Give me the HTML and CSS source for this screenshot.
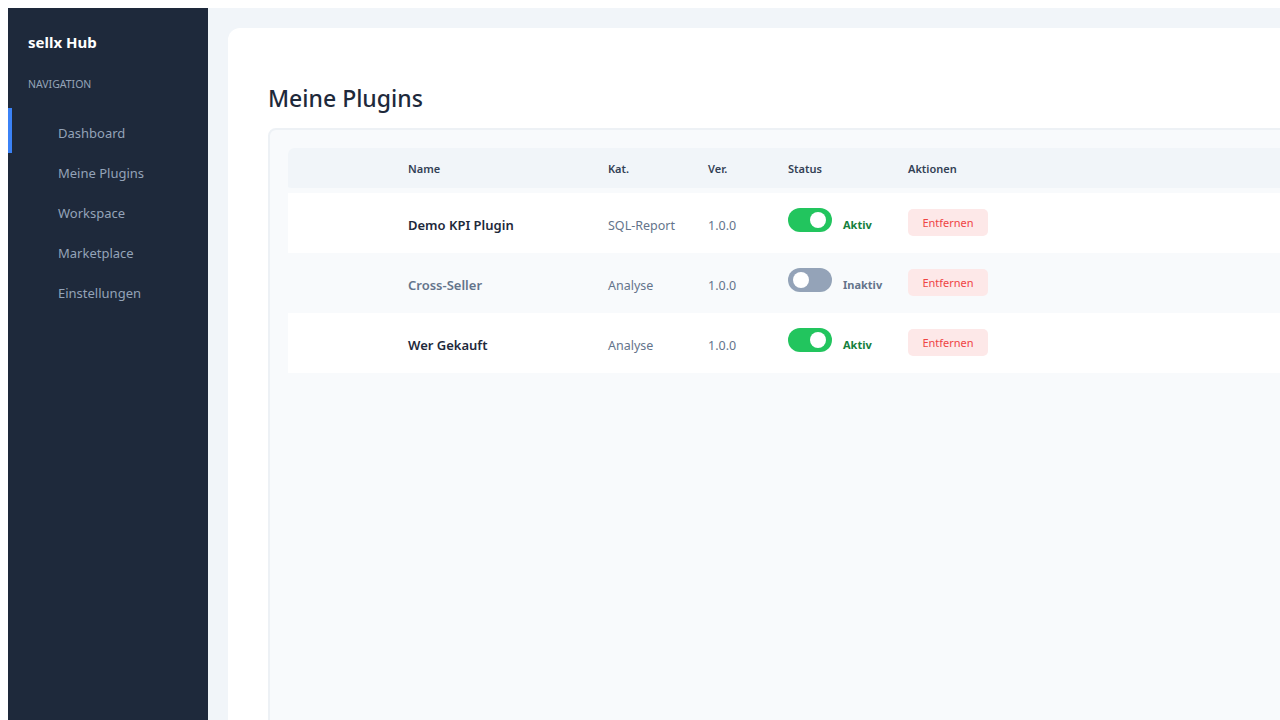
FILE: index.html
```html
<!DOCTYPE html>
<html lang="de">
<head>
  <meta charset="UTF-8" />
  <meta name="viewport" content="width=device-width, initial-scale=1.0" />
  <title>sellx Hub – Meine Plugins</title>
  <link rel="stylesheet" href="styles.css">
</head>
<body>
  <div class="app">
    <!-- Sidebar -->
    <aside class="sidebar">
      <div class="brand">sellx Hub</div>
      <div class="nav-label">NAVIGATION</div>
      <nav class="nav">
        <a class="nav-item active" href="#">Dashboard</a>
        <a class="nav-item" href="#">Meine Plugins</a>
        <a class="nav-item" href="#">Workspace</a>
        <a class="nav-item" href="#">Marketplace</a>
        <a class="nav-item" href="#">Einstellungen</a>
      </nav>
    </aside>

    <!-- Main -->
    <main class="main">
      <section class="card">
        <h2 class="page-title">Meine Plugins</h2>
        <div class="panel">
          <table class="plugins">
            <colgroup>
              <col class="c-icon">
              <col class="c-name">
              <col class="c-cat">
              <col class="c-ver">
              <col class="c-status">
              <col class="c-actions">
            </colgroup>
            <thead>
              <tr>
                <th></th>
                <th>Name</th>
                <th>Kat.</th>
                <th>Ver.</th>
                <th>Status</th>
                <th>Aktionen</th>
              </tr>
            </thead>
            <tbody>
              <tr>
                <td></td>
                <td class="name">Demo KPI Plugin</td>
                <td class="muted">SQL-Report</td>
                <td class="muted">1.0.0</td>
                <td class="status"><span class="toggle on"></span><span class="state on">Aktiv</span></td>
                <td class="actions"><button class="btn-remove">Entfernen</button></td>
              </tr>
              <tr>
                <td></td>
                <td class="name off">Cross-Seller</td>
                <td class="muted">Analyse</td>
                <td class="muted">1.0.0</td>
                <td class="status"><span class="toggle"></span><span class="state">Inaktiv</span></td>
                <td class="actions"><button class="btn-remove">Entfernen</button></td>
              </tr>
              <tr>
                <td></td>
                <td class="name">Wer Gekauft</td>
                <td class="muted">Analyse</td>
                <td class="muted">1.0.0</td>
                <td class="status"><span class="toggle on"></span><span class="state on">Aktiv</span></td>
                <td class="actions"><button class="btn-remove">Entfernen</button></td>
              </tr>
            </tbody>
          </table>
        </div>
      </section>
    </main>
  </div>
</body>
</html>
```

FILE: styles.css
```css
body {
  margin: 8px 0 0 8px;
  font-family: "Noto Sans", "Open Sans", sans-serif;
  color: #1e293b;
}
.app {
  display: flex;
  height: calc(100vh - 8px);
  overflow: hidden;
}

/* sidebar */
.sidebar {
  width: 200px;
  flex-shrink: 0;
  background: #1e293b;
  padding-top: 24px;
}
.brand {
  padding: 0 20px;
  font-size: 15px;
  font-weight: 700;
  line-height: 20px;
  color: #fff;
}
.nav-label {
  margin-top: 24px;
  padding: 0 20px;
  font-size: 10.5px;
  line-height: 16px;
  color: #94a3b8;
}
.nav {
  display: flex;
  flex-direction: column;
  margin-top: 16px;
}
.nav-item {
  display: block;
  padding: 10px 0 10px 46px;
  border-left: 4px solid transparent;
  font-size: 13px;
  line-height: 20px;
  color: #94a3b8;
  text-decoration: none;
}
.nav-item.active {
  border-left-color: #3b82f6;
  padding-top: 15px;
  padding-bottom: 10px;
}

/* main */
.main {
  flex: 1;
  min-width: 0;
  background: #f1f5f9;
  padding: 20px 0 0 20px;
}
.card {
  width: 1224px;
  min-height: 800px;
  background: #fff;
  border-radius: 12px;
  padding: 40px;
}
.page-title {
  margin: 14px 0 14px;
  font-size: 23px;
  font-weight: 500;
  line-height: 32px;
  color: #1e293b;
}
.panel {
  background: #f8fafc;
  border: 2px solid #edf1f5;
  border-radius: 8px;
  padding: 18px;
  min-height: 700px;
}

/* table */
.plugins {
  width: 1104px;
  table-layout: fixed;
  border-collapse: separate;
  border-spacing: 0;
}
.c-icon { width: 120px; }
.c-name { width: 200px; }
.c-cat { width: 100px; }
.c-ver { width: 80px; }
.c-status { width: 120px; }
.plugins th {
  height: 40px;
  padding: 0;
  text-align: left;
  font-size: 11px;
  font-weight: 600;
  color: #334155;
  background: #f1f5f9;
  background-clip: padding-box;
  border-bottom: 5px solid transparent;
}
.plugins th:first-child { border-radius: 6px 0 0 6px; }
.plugins th:last-child { border-radius: 0 6px 6px 0; }
.plugins tbody tr { height: 60px; }
.plugins tbody tr:nth-child(odd) { background: #fff; }
.plugins td {
  padding: 4px 0 0;
  vertical-align: middle;
  font-size: 12.5px;
}
.plugins td.status { padding: 0 0 6px; }
.plugins td.actions { padding: 0 0 2px; }
.plugins td.name {
  font-size: 13px;
  font-weight: 600;
  color: #1e293b;
}
.plugins td.name.off { color: #64748b; }
.muted { color: #64748b; }

.toggle {
  display: inline-block;
  position: relative;
  width: 44px;
  height: 24px;
  border-radius: 12px;
  background: #94a3b8;
  vertical-align: -3px;
}
.toggle::after {
  content: "";
  position: absolute;
  top: 4px;
  left: 5px;
  width: 16px;
  height: 16px;
  border-radius: 50%;
  background: #fff;
}
.toggle.on { background: #22c55e; }
.toggle.on::after { left: 22px; }
.state {
  margin-left: 11px;
  font-size: 11px;
  font-weight: 700;
  color: #64748b;
}
.state.on { color: #15803d; }

.btn-remove {
  display: block;
  width: 80px;
  height: 27px;
  padding: 0;
  border: none;
  border-radius: 5px;
  background: #fde8e8;
  color: #ef4444;
  font-family: inherit;
  font-size: 11px;
  cursor: pointer;
}
```
